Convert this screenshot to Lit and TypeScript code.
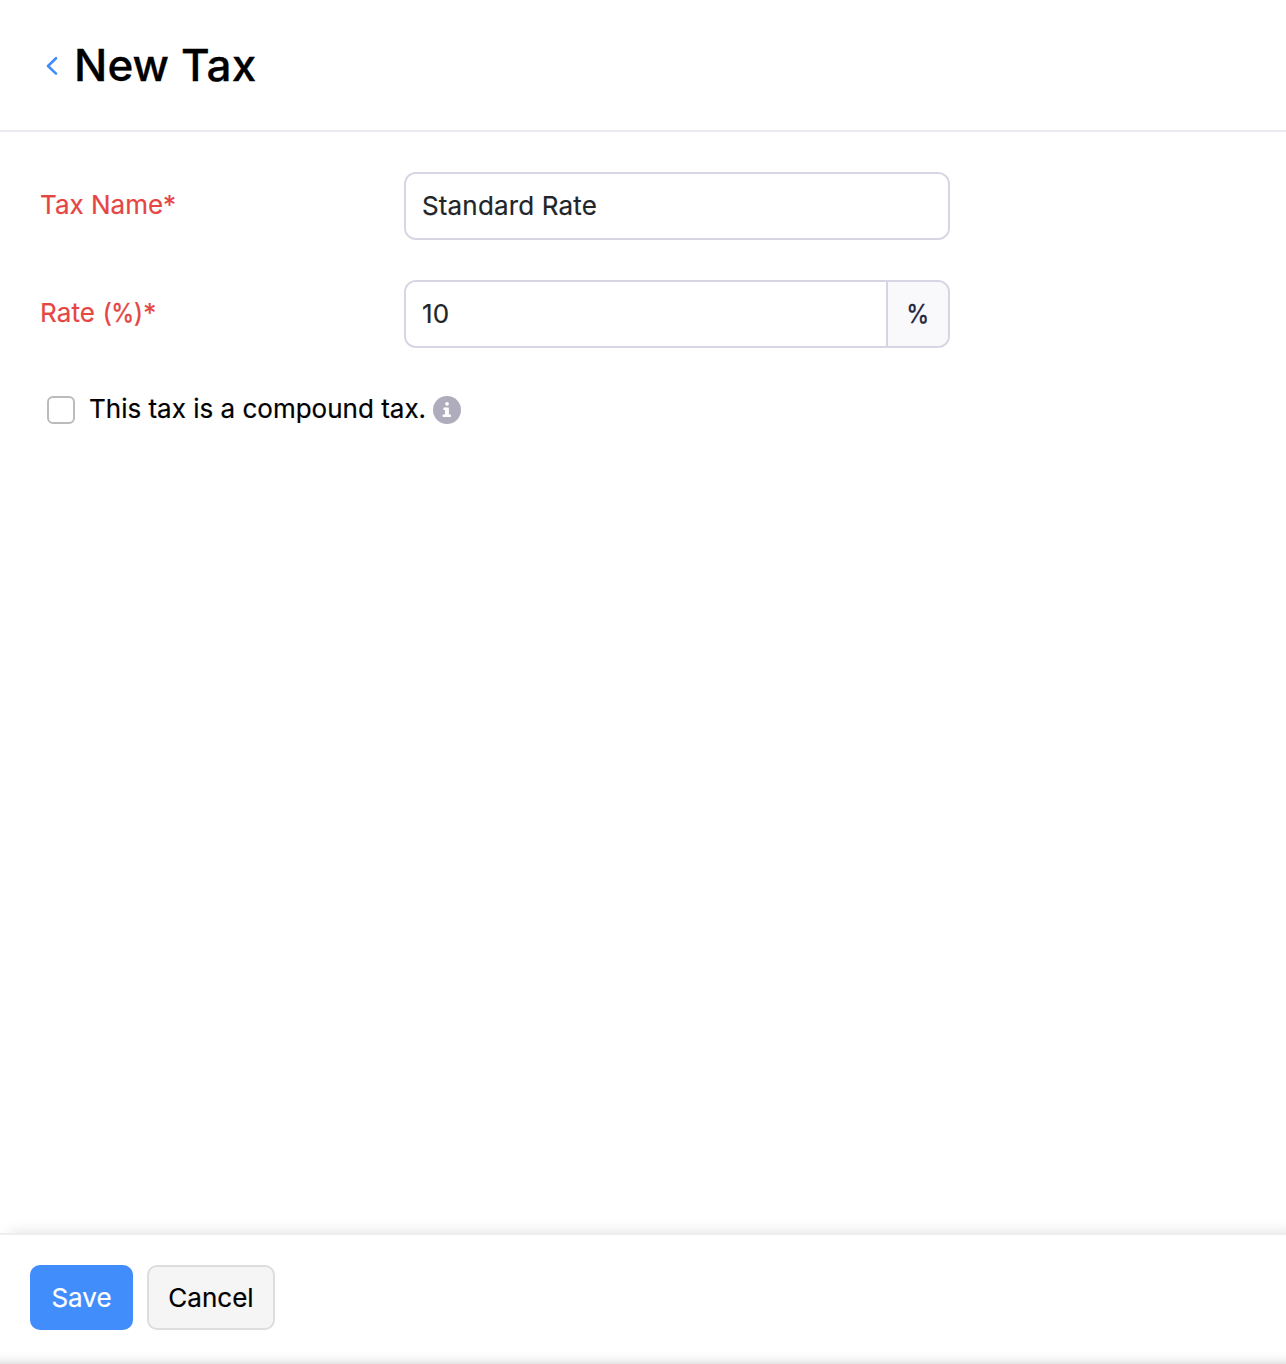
import { LitElement, html, css } from "lit";
import { customElement } from "lit/decorators.js";

@customElement("app-root")
export class AppRoot extends LitElement {
  static styles = css`
    :host { display: flex; flex-direction: column; height: 1364px; overflow: hidden; box-sizing: border-box; background: #fff; color: #000; font-family: Inter, "Liberation Sans", sans-serif; font-size: 26px; line-height: 39px; }
    * { box-sizing: border-box; }
    header { flex: none; height: 132px; border-bottom: 2px solid #ebeaf0; display: flex; align-items: center; padding-left: 46px; }
    .back { display: block; width: 12px; height: 20px; margin: 2px 16px 0 0; }
    h1 { margin: 0; font-size: 44px; line-height: 60px; font-weight: 500; letter-spacing: 0.1px; -webkit-text-stroke: 0.3px currentColor; }
    main { flex: 1; padding: 40px; }
    .row { display: flex; height: 68px; margin-bottom: 40px; }
    .row label { width: 364px; padding-top: 13px; color: #e54643; -webkit-text-stroke: 0.2px currentColor; }
    .rate { letter-spacing: 0.1px; }
    .percent { display: inline-block; transform: scaleX(0.9); -webkit-text-stroke: 0.3px currentColor; }
    .rate .percent { margin: 0 -2px; }
    .group { display: flex; width: 546px; border: 2px solid #d7d5e2; border-radius: 12px; overflow: hidden; }
    input.text { flex: 1; min-width: 0; border: 0; outline: 0; padding: 0 16px 2px; font: inherit; letter-spacing: 0.15px; color: #212529; background: #fff; -webkit-text-stroke: 0.2px currentColor; }
    .addon { width: 62px; padding-bottom: 2px; border-left: 2px solid #d7d5e2; background: #f9f9fb; color: #21263c; display: flex; align-items: center; justify-content: center; }
    .check { display: flex; align-items: center; padding: 3px 0 0 7px; }
    .check label { margin-top: -2px; -webkit-text-stroke: 0.2px currentColor; }
    .box { appearance: none; margin: 0 14px 0 0; width: 28px; height: 28px; border: 2px solid #bbb; border-radius: 6px; background: #fff; }
    .info { width: 28px; height: 28px; margin-left: 7px; }
    footer { flex: none; height: 131px; display: flex; align-items: flex-start; gap: 14px; padding: 30px 30px 0; border-top: 2px solid #eee; background: linear-gradient(to top, #e4e4e4, #f3f3f3 4px, #fcfcfc 9px, #fff 14px); box-shadow: 9px 0 14px rgba(0, 0, 0, 0.13); }
    button { height: 65px; border-radius: 10px; font: inherit; padding: 0; -webkit-text-stroke: 0.2px currentColor; }
    .save { width: 103px; border: 0; background: #408dfb; color: #fff; }
    .cancel { width: 128px; border: 2px solid #ddd; background: #f5f5f5; color: #000; }
  `;
  render() {
    return html`
      <header>
        <svg class="back" viewBox="0 0 12 20" fill="none" stroke="#408dfb" stroke-width="2.6" stroke-linecap="round" stroke-linejoin="round"><path d="M10 2.2 2 10l8 7.6" /></svg>
        <h1>New Tax</h1>
      </header>
      <main>
        <div class="row"><label for="name">Tax Name*</label><div class="group"><input id="name" class="text" .value=${"Standard Rate"} /></div></div>
        <div class="row"><label class="rate" for="rate">Rate (<span class="percent">%</span>)*</label><div class="group"><input id="rate" class="text" .value=${"10"} /><span class="addon"><span class="percent">%</span></span></div></div>
        <div class="check">
          <input id="compound" class="box" type="checkbox" /><label for="compound">This tax is a compound tax.</label>
          <svg class="info" viewBox="0 0 28 28"><circle cx="14" cy="14" r="14" fill="#afacbc" /><circle cx="14" cy="7.8" r="1.9" fill="#fff" /><path fill="#fff" d="M11 11.5h4.2a.7.7 0 0 1 .7.7v6.3h1.4a.7.7 0 0 1 .7.7v1.1a.7.7 0 0 1-.7.7h-7a.7.7 0 0 1-.7-.7v-1.1a.7.7 0 0 1 .7-.7H12V14h-1a.7.7 0 0 1-.7-.7v-1.1a.7.7 0 0 1 .7-.7z" /></svg>
        </div>
      </main>
      <footer><button class="save">Save</button><button class="cancel">Cancel</button></footer>
    `;
  }
}
